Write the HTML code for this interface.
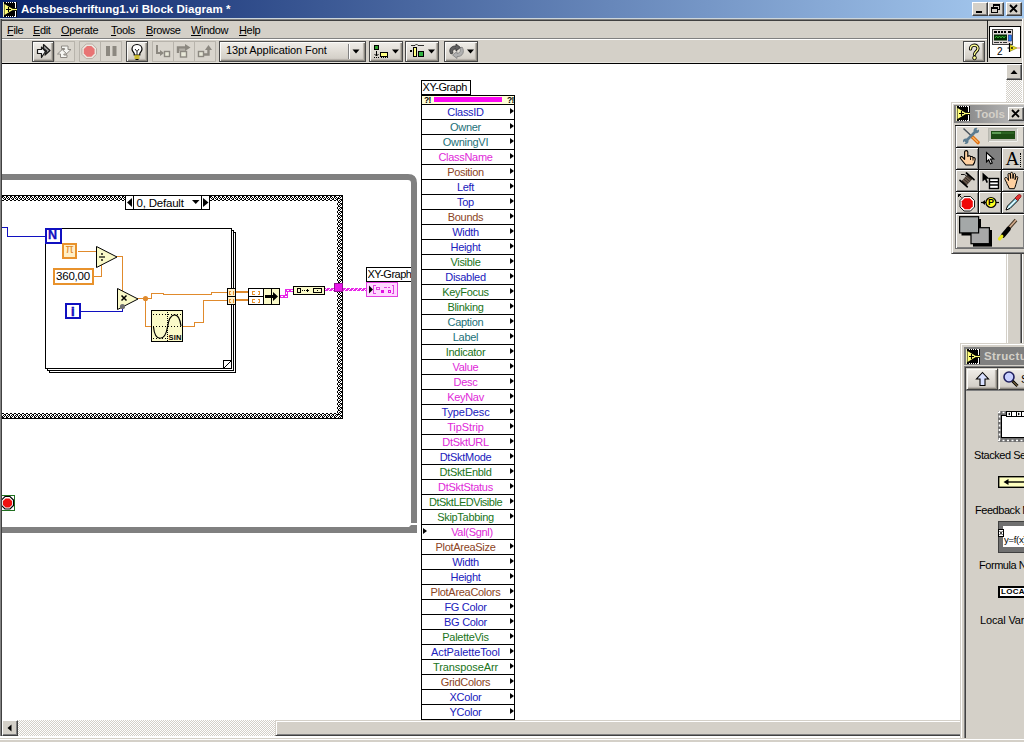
<!DOCTYPE html>
<html><head><meta charset="utf-8"><title>Achsbeschriftung1.vi Block Diagram</title>
<style>
*{box-sizing:border-box;margin:0;padding:0}
html,body{width:1024px;height:742px;overflow:hidden;background:#d4d0c8}
body{position:relative;font-family:"Liberation Sans",sans-serif;font-size:11px;color:#000}
.a{position:absolute}
.t{position:absolute;white-space:nowrap;line-height:13px}
.btn{position:absolute;background:#d4d0c8;border:1px solid;border-color:#fff #404040 #404040 #fff;box-shadow:inset -1px -1px 0 #808080}
.fbtn{position:absolute;border:1px solid #b8b4ac;background:#d9d5cd}
.rbtn{position:absolute;background:linear-gradient(#f0eee9,#dedad3 55%,#cfcbc3);border:1px solid #484848;box-shadow:inset 1px 1px 0 #fbfbf9,inset -1px -1px 0 #8c887f,inset -2px -2px 1px #b4b0a8}
.row{position:absolute;left:0;width:94px;height:16px;border:1px solid #000;background:#fff;text-align:center;line-height:13px;font-size:11px;white-space:nowrap}
.row span{position:absolute;left:0;width:87px;top:1px;text-align:center;letter-spacing:-0.3px}
.row i{position:absolute;right:0px;top:3px;width:0;height:0;border-left:4px solid #000;border-top:3.5px solid transparent;border-bottom:3.5px solid transparent}
.row i.l{right:auto;left:1px}.row span.v{left:8px;width:84px}.row span.n{letter-spacing:-0.5px}.row span.w{letter-spacing:-0.1px}
.cb{color:#2020bc}.ct{color:#1c7078}.cm{color:#e028d8}.cr{color:#8c4424}.cg{color:#207420}
u{text-decoration:underline;text-decoration-thickness:1px;text-underline-offset:1px}
</style></head><body>
<div class="a" style="left:2px;top:64px;width:1020px;height:656px;background:#fff"></div>
<div class="a" style="left:0;top:0;width:1024px;height:18px;background:linear-gradient(90deg,#0a246a 0%,#a6caf0 100%)"></div>
<div class="a" style="left:0;top:18px;width:1024px;height:1px;background:#ccd6dc"></div>
<div class="a" style="left:0;top:19px;width:1024px;height:1px;background:#808080"></div>
<div class="a" style="left:1px;top:20px;width:1022px;height:1px;background:#404040"></div>
<svg class="a" style="left:3px;top:2px" width="14" height="15" viewBox="0 0 14 15"><g shape-rendering="crispEdges"><rect width="14" height="15" fill="#000"/><rect x="0" y="0" width="1" height="15" fill="#f0f0b0"/><rect x="3" y="0" width="1" height="1" fill="#fff"/><rect x="5" y="0" width="1" height="1" fill="#fff"/><rect x="7" y="0" width="1" height="1" fill="#fff"/><rect x="9" y="0" width="1" height="1" fill="#fff"/><rect x="11" y="0" width="1" height="1" fill="#fff"/><rect x="3" y="14" width="1" height="1" fill="#fff"/><rect x="5" y="14" width="1" height="1" fill="#fff"/><rect x="7" y="14" width="1" height="1" fill="#fff"/><rect x="9" y="14" width="1" height="1" fill="#fff"/><rect x="11" y="14" width="1" height="1" fill="#fff"/><rect x="12" y="0" width="1" height="6" fill="#fff"/><rect x="12" y="9" width="1" height="6" fill="#fff"/></g><path d="M1.500 2L10.500 7.500L1.500 13z" fill="#ffff78"/><path d="M9 7.500h5" stroke="#ffff78" stroke-width="1.200"/><path d="M3 7.500h5M5.500 5v5" stroke="#000" stroke-width="1.100"/></svg>
<div class="t" style="left:21px;top:3px;color:#fff;font-weight:bold;font-size:11.5px;letter-spacing:0.03px" id="ttl">Achsbeschriftung1.vi Block Diagram *</div>
<div class="btn" style="left:972px;top:2px;width:16px;height:14px"><svg width="14" height="12"><rect x="3" y="8" width="6" height="2" fill="#000"/></svg></div>
<div class="btn" style="left:988px;top:2px;width:16px;height:14px"><svg width="14" height="12"><rect x="4.5" y="1.5" width="6" height="5" fill="none" stroke="#000"/><rect x="4" y="1" width="7" height="2" fill="#000"/><rect x="2.5" y="4.5" width="6" height="5" fill="#d4d0c8" stroke="#000"/><rect x="2" y="4" width="7" height="2" fill="#000"/></svg></div>
<div class="btn" style="left:1006px;top:2px;width:16px;height:14px"><svg width="14" height="12"><path d="M3 2l7 7M10 2l-7 7" stroke="#000" stroke-width="1.8"/></svg></div>
<div class="a" style="left:0;top:19px;width:1px;height:720px;background:#848484"></div>
<div class="a" style="left:1px;top:19px;width:1px;height:718px;background:#404040"></div>
<div class="a" style="left:1022px;top:19px;width:1px;height:720px;background:#fff"></div>
<div class="a" style="left:1023px;top:19px;width:1px;height:720px;background:#d4d0c8"></div>
<div class="t m" style="left:7px;top:24px;letter-spacing:-0.35px"><u>F</u>ile</div>
<div class="t m" style="left:33px;top:24px;letter-spacing:-0.35px"><u>E</u>dit</div>
<div class="t m" style="left:61px;top:24px;letter-spacing:-0.35px"><u>O</u>perate</div>
<div class="t m" style="left:111px;top:24px;letter-spacing:-0.35px"><u>T</u>ools</div>
<div class="t m" style="left:146px;top:24px;letter-spacing:-0.35px"><u>B</u>rowse</div>
<div class="t m" style="left:191px;top:24px;letter-spacing:-0.35px"><u>W</u>indow</div>
<div class="t m" style="left:239px;top:24px;letter-spacing:-0.35px"><u>H</u>elp</div>
<div class="a" style="left:2px;top:38px;width:985px;height:1px;background:#808080"></div>
<div class="a" style="left:2px;top:39px;width:985px;height:1px;background:#fff"></div>
<div class="a" style="left:987px;top:20px;width:1px;height:43px;background:#202020"></div>
<div class="a" style="left:2px;top:62px;width:1020px;height:1px;background:#e6e4de"></div><div class="a" style="left:2px;top:63px;width:1020px;height:1px;background:#000"></div>
<div class="rbtn" style="left:32px;top:41px;width:22px;height:21px"><svg width="20" height="19" viewBox="0 0 20 19"><path d="M4.500 7.500H8.500V5L12.500 9.500L8.500 15.500V11.500H4.500Z" fill="#f4f4f4" stroke="#181818" stroke-width="1.200" stroke-linejoin="round"/><path d="M10.500 2.500L17 8.500L12 13L13.500 9L10.500 6.500Z" fill="#a4a4a4" stroke="#181818" stroke-width="1.200" stroke-linejoin="round"/></svg></div>
<div class="fbtn" style="left:54px;top:41px;width:21px;height:21px"><svg width="19" height="19" viewBox="0 0 19 19"><path d="M6.500 4h6.500v3.500h3l-4.700 4.500l-4.700-4.500h3v-1h-3.100z" fill="#f6f6f2" stroke="#8e8a84" stroke-width="1"/><path d="M12 15.500h-6.500v-3.500h-3l4.700-4.500l4.700 4.500h-3v1h3.100z" fill="#f6f6f2" stroke="#8e8a84" stroke-width="1"/></svg></div>
<div class="fbtn" style="left:79px;top:41px;width:22px;height:21px"><svg width="20" height="19" viewBox="0 0 20 19"><path d="M6.200 2h6l4.300 4.300v6l-4.300 4.300h-6l-4.300-4.300v-6z" fill="#ece8e0" stroke="#b8aca4" stroke-width="1"/><path d="M7 3.900h4.400l3.200 3.200v4.400l-3.200 3.200h-4.400l-3.200-3.200v-4.400z" fill="#e87474"/></svg></div>
<div class="fbtn" style="left:100px;top:41px;width:22px;height:21px"><svg width="20" height="19" viewBox="0 0 20 19"><rect x="5" y="4" width="4" height="10" fill="#8c8880"/><rect x="11.500" y="4" width="4" height="10" fill="#8c8880"/></svg></div>
<div class="rbtn" style="left:126px;top:41px;width:22px;height:21px"><svg width="20" height="19" viewBox="0 0 20 19"><path d="M10 2.500c-3 0-5 2.100-5 4.600c0 2 1.500 3 2.200 4.400v1.500h5.600v-1.500c0.700-1.400 2.200-2.400 2.200-4.400c0-2.500-2-4.600-5-4.600z" fill="#fff" stroke="#000" stroke-width="1.2"/><path d="M8 7l2 2.500l2-2.500M10 9.500v3" fill="none" stroke="#000" stroke-width="0.9"/><path d="M7.500 14h5M7.500 16h5" stroke="#c8b400" stroke-width="1.3"/><path d="M8.500 17.500h3" stroke="#000" stroke-width="1"/></svg></div>
<div class="fbtn" style="left:152px;top:41px;width:22px;height:21px"><svg width="20" height="19" viewBox="0 0 20 19"><path d="M4 3v8h3.500" fill="none" stroke="#8c8880" stroke-width="2"/><path d="M7 8l4 3-4 3z" fill="#8c8880"/><rect x="11.500" y="9.500" width="5" height="5" fill="#e8e8d8" stroke="#8c8880" stroke-width="1.4"/></svg></div>
<div class="fbtn" style="left:173px;top:41px;width:22px;height:21px"><svg width="20" height="19" viewBox="0 0 20 19"><path d="M4 11v-5.500h8" fill="none" stroke="#8c8880" stroke-width="2.400"/><path d="M11 2l5.500 3.500-5.500 3.500z" fill="#8c8880"/><rect x="6.500" y="9.500" width="6" height="5.500" fill="#e8e8d8" stroke="#8c8880" stroke-width="1.400"/><path d="M5 8h7" stroke="#8c8880" stroke-width="1"/></svg></div>
<div class="fbtn" style="left:194px;top:41px;width:22px;height:21px"><svg width="20" height="19" viewBox="0 0 20 19"><rect x="3.500" y="9.500" width="5" height="5" fill="#e8e8d8" stroke="#8c8880" stroke-width="1.400"/><path d="M9 12.500h4.500v-5" fill="none" stroke="#8c8880" stroke-width="2.400"/><path d="M10 8l3.500-5 3.500 5z" fill="#8c8880"/></svg></div>
<div class="rbtn" style="left:219px;top:41px;width:147px;height:21px"></div>
<div class="a" style="left:348px;top:44px;width:1px;height:15px;background:#808080"></div><div class="a" style="left:349px;top:44px;width:1px;height:15px;background:#fff"></div>
<div class="t" style="left:226px;top:44px;font-size:11px;letter-spacing:-0.1px" id="fnt">13pt Application Font</div>
<svg class="a" style="left:352px;top:49px" width="9" height="5"><path d="M0.500 0.500h7l-3.500 4z" fill="#000"/></svg>
<div class="rbtn" style="left:369px;top:41px;width:34px;height:21px"><svg width="32" height="19" viewBox="0 0 32 19"><rect x="4.500" y="3.500" width="4" height="4" fill="#30a030" stroke="#000"/><path d="M6.500 9v5M4.500 12l2 2 2-2" fill="none" stroke="#000"/><path d="M4 15.500h5" stroke="#000" stroke-dasharray="1 1"/><rect x="10.500" y="10.500" width="7" height="4" fill="#ffff80" stroke="#000"/><path d="M11 15.500h7" stroke="#000" stroke-dasharray="1 1"/><path d="M22 7.500h7l-3.500 4z" fill="#000"/></svg></div>
<div class="rbtn" style="left:405px;top:41px;width:34px;height:21px"><svg width="32" height="19" viewBox="0 0 32 19"><path d="M5 3.500h4l1.500-1.500 1.500 1.500h6" fill="none" stroke="#000" stroke-width="0.800"/><rect x="4" y="8" width="2" height="2" fill="#000"/><rect x="7.500" y="5.500" width="3" height="9" fill="#ffff80" stroke="#000"/><rect x="12.500" y="9.500" width="5" height="5" fill="#30b040" stroke="#000"/><path d="M22 7.500h7l-3.500 4z" fill="#000"/></svg></div>
<div class="rbtn" style="left:444px;top:41px;width:34px;height:21px"><svg width="32" height="19" viewBox="0 0 32 19"><path d="M6 12c-3-4 0-8.500 5-8l0-2 4.500 3.500-4.500 3.500v-2c-3 0-4 2-3 4z" fill="#606060" stroke="#303030" stroke-width="0.800"/><path d="M17 5c3 4 1 10-5 9.500l0 2-4.500-3.500 4.500-3.500v2c3 0 4-3 3-5z" fill="#b0b0b0" stroke="#808080" stroke-width="0.800"/><path d="M22 7.500h7l-3.500 4z" fill="#000"/></svg></div>
<div class="rbtn" style="left:963px;top:41px;width:22px;height:21px"><svg width="20" height="19" viewBox="0 0 20 19"><path d="M6.500 7c0-5 7.500-5 7.500-0.500c0 3-3.500 3-3.500 6" fill="none" stroke="#000" stroke-width="3.200" stroke-linecap="round"/><path d="M6.500 7c0-5 7.500-5 7.500-0.500c0 3-3.500 3-3.500 6" fill="none" stroke="#ffff90" stroke-width="1.400" stroke-linecap="round"/><circle cx="10.500" cy="15.800" r="1.900" fill="#ffff90" stroke="#000" stroke-width="0.900"/></svg></div>
<div class="a" style="left:989px;top:26px;width:32px;height:32px;background:#fff;border:1px solid #000"><svg width="31" height="31" viewBox="0 0 31 31"><rect x="2.500" y="2.500" width="20" height="15" fill="#e0d8d8" stroke="#404040"/><path d="M4 5h3M8 5h2M11 5h2M14 5h2M18 5h3" stroke="#000" stroke-width="2"/><rect x="4" y="7.500" width="13" height="6" fill="#002800"/><path d="M5 11l1.500-2 1.500 2 1.500-2 1.500 2 1.500-2 1.500 2 1.500-2" fill="none" stroke="#40d040" stroke-width="0.800"/><rect x="18.500" y="8" width="3" height="6" fill="#2080f0" stroke="#102080" stroke-width="0.600"/><path d="M4 15.500h5M10 15.500h2M13 15.500h4" stroke="#303030" stroke-width="1"/><path d="M19.500 17.500l7.500 3.500-7.500 3.500z" fill="#f0e020" stroke="#808000" stroke-width="0.600"/><path d="M19.500 16v9" stroke="#000" stroke-width="1.200"/><path d="M27 21h3" stroke="#e06060" stroke-width="0.800"/><path d="M17.500 21h2" stroke="#000"/><circle cx="22" cy="21" r="0.900" fill="#000"/></svg><div class="t" style="left:7px;top:19px;font-size:10px;line-height:11px">2</div></div>
<div class="a" style="left:2px;top:720px;width:1004px;height:16px;background:repeating-conic-gradient(#d4d0c8 0% 25%,#fff 0% 50%) 0 0/2px 2px"></div>
<div class="btn" style="left:2px;top:720px;width:16px;height:16px"><svg width="14" height="14"><path d="M8.500 3.500v7l-4-3.500z" fill="#000"/></svg></div>
<div class="a" style="left:275px;top:720px;width:700px;height:16px;background:#d4d0c8;border:1px solid;border-color:#d4d0c8 #404040 #404040 #d4d0c8;box-shadow:inset 1px 1px 0 #fff,inset -1px -1px 0 #808080"></div>
<div class="a" style="left:1006px;top:64px;width:16px;height:656px;background:repeating-conic-gradient(#d4d0c8 0% 25%,#fff 0% 50%) 0 0/2px 2px"></div>
<div class="btn" style="left:1006px;top:64px;width:16px;height:16px"><svg width="14" height="14"><path d="M3.500 9h7l-3.500-4z" fill="#000"/></svg></div>
<div class="a" style="left:1006px;top:240px;width:16px;height:120px;background:#d4d0c8;border:1px solid;border-color:#d4d0c8 #404040 #404040 #d4d0c8;box-shadow:inset 1px 1px 0 #fff,inset -1px -1px 0 #808080"></div>
<div class="a" style="left:0;top:736px;width:1024px;height:2px;background:#fff"></div>
<svg class="a" style="left:2px;top:64px" width="418" height="656" viewBox="2 64 418 656" shape-rendering="crispEdges"><defs><pattern id="ph" x="0" y="195" width="4" height="6" patternUnits="userSpaceOnUse"><rect width="4" height="6" fill="#000"/><rect x="0" y="5" width="1" height="1" fill="#fff"/><rect x="1" y="5" width="1" height="1" fill="#fff"/><rect x="2" y="4" width="1" height="1" fill="#fff"/><rect x="3" y="4" width="1" height="1" fill="#fff"/><rect x="0" y="3" width="1" height="1" fill="#fff"/><rect x="2" y="3" width="1" height="1" fill="#fff"/><rect x="1" y="2" width="1" height="1" fill="#fff"/><rect x="3" y="2" width="1" height="1" fill="#fff"/><rect x="0" y="1" width="1" height="1" fill="#fff"/><rect x="1" y="1" width="1" height="1" fill="#fff"/></pattern><pattern id="ph2" x="0" y="413" width="4" height="6" patternUnits="userSpaceOnUse"><rect width="4" height="6" fill="#000"/><rect x="0" y="0" width="1" height="1" fill="#fff"/><rect x="1" y="0" width="1" height="1" fill="#fff"/><rect x="2" y="1" width="1" height="1" fill="#fff"/><rect x="3" y="1" width="1" height="1" fill="#fff"/><rect x="0" y="2" width="1" height="1" fill="#fff"/><rect x="2" y="2" width="1" height="1" fill="#fff"/><rect x="1" y="3" width="1" height="1" fill="#fff"/><rect x="3" y="3" width="1" height="1" fill="#fff"/><rect x="0" y="4" width="1" height="1" fill="#fff"/><rect x="1" y="4" width="1" height="1" fill="#fff"/></pattern><pattern id="pv" x="337" y="1" width="6" height="4" patternUnits="userSpaceOnUse"><rect width="6" height="4" fill="#000"/><rect x="0" y="0" width="1" height="1" fill="#fff"/><rect x="0" y="1" width="1" height="1" fill="#fff"/><rect x="1" y="2" width="1" height="1" fill="#fff"/><rect x="1" y="3" width="1" height="1" fill="#fff"/><rect x="2" y="0" width="1" height="1" fill="#fff"/><rect x="2" y="2" width="1" height="1" fill="#fff"/><rect x="3" y="1" width="1" height="1" fill="#fff"/><rect x="3" y="3" width="1" height="1" fill="#fff"/><rect x="4" y="0" width="1" height="1" fill="#fff"/><rect x="4" y="1" width="1" height="1" fill="#fff"/></pattern><pattern id="pw" x="0" y="288" width="4" height="3" patternUnits="userSpaceOnUse"><rect width="4" height="3" fill="#e828e8"/><rect x="2" y="0" width="1" height="1" fill="#fff"/><rect x="1" y="1" width="1" height="1" fill="#fff"/><rect x="0" y="2" width="1" height="1" fill="#fff"/></pattern></defs><g shape-rendering="auto"><path d="M0 177H408Q414 177 414 183V523" fill="none" stroke="#808080" stroke-width="6"/><path d="M0 527H409L411 525H417V533H0z" fill="#808080"/></g><rect x="0" y="195" width="338" height="6" fill="url(#ph)"/><rect x="0" y="413" width="338" height="6" fill="url(#ph2)"/><rect x="337" y="200" width="6" height="214" fill="url(#pv)"/><rect x="337" y="195" width="6" height="1" fill="#000"/><rect x="337" y="418" width="6" height="1" fill="#000"/><rect x="338" y="196" width="4" height="4" fill="url(#pv)"/><rect x="338" y="414" width="4" height="4" fill="url(#pv)"/><rect x="342" y="195" width="1" height="224" fill="#000"/><rect x="125.500" y="195.500" width="84" height="14" fill="#fff" stroke="#000"/><path d="M133.500 196v13M201.500 196v13" stroke="#000"/><path d="M127 202.500l5-4.500v9z" fill="#000" shape-rendering="auto"/><path d="M208.500 202.500l-5.500-4.500v9z" fill="#000" shape-rendering="auto"/><path d="M192 200h7.500l-3.750 4z" fill="#000" shape-rendering="auto"/><path d="M2 227.500H7.500V236.500H45" fill="none" stroke="#1010c0"/><path d="M49.500 370V372.500H235.500V232.500H233" fill="none" stroke="#000"/><path d="M47.500 368V370.500H233.500V230.500H231" fill="none" stroke="#000"/><rect x="45.500" y="228.500" width="186" height="140" fill="#fff" stroke="#000"/><path d="M223.500 368V360.500H231" fill="none" stroke="#000"/><path d="M223.500 368.500L231.500 360.500" stroke="#000" shape-rendering="auto"/><rect x="46" y="229" width="15" height="14" fill="#fff" stroke="#1010c0" stroke-width="2"/><rect x="63" y="244" width="13" height="14" fill="#fff0c8" stroke="#e8922c" stroke-width="2"/><rect x="54" y="269" width="39" height="15" fill="#fff" stroke="#e8922c" stroke-width="2"/><rect x="66" y="304" width="14" height="14" fill="#fff" stroke="#1010c0" stroke-width="2"/><path d="M78 251.500H96" fill="none" stroke="#e08a2c"/><path d="M94 276.500H101.500V264" fill="none" stroke="#e08a2c"/><path d="M116 256.500H122.500V291" fill="none" stroke="#e08a2c"/><path d="M137 298.500H151.500V293.500H163.500V294.500H211.500V292.500H227" fill="none" stroke="#e08a2c"/><path d="M145.500 298V326.500H151" fill="none" stroke="#e08a2c"/><path d="M183 326.500H194.500V322.500H203.500V300.500H227" fill="none" stroke="#e08a2c"/><circle cx="145.500" cy="298.500" r="2.600" fill="#e08a2c" shape-rendering="auto"/><path d="M81 311.500H122.500V306" fill="none" stroke="#1010c0"/><g shape-rendering="auto"><path d="M96.500 246.500V267.500L117 257z" fill="#fafac8" stroke="#000"/><path d="M117.500 288.500V309.500L138 299z" fill="#fafac8" stroke="#000"/><circle cx="122.500" cy="306.500" r="2.600" fill="#707070"/><path d="M99 257h6" stroke="#000" stroke-width="1.200"/><circle cx="102" cy="254" r="0.900"/><circle cx="102" cy="260" r="0.900"/><path d="M121.500 295.500l5 5M126.500 295.500l-5 5" stroke="#000" stroke-width="1.500"/></g><rect x="151.500" y="310.500" width="31" height="31" fill="#fafac8" stroke="#000"/><path d="M153 314.500H182M153 326.500H182M153 338.500H168" stroke="#000" stroke-dasharray="1 2"/><path d="M167.500 312V341" stroke="#000" stroke-dasharray="1 1"/><path d="M153.500 327C155 342 165 342 167.500 327C170 311 179 311 181 326" fill="none" stroke="#000" stroke-width="1.200" shape-rendering="auto"/><rect x="227.500" y="288.500" width="8" height="8" fill="#fff0c8" stroke="#000"/><path d="M230.500 291.500h-1v3h1M232.500 291.500h1v3h-1" fill="none" stroke="#e8922c"/><rect x="227.500" y="296.500" width="8" height="8" fill="#fff0c8" stroke="#000"/><path d="M230.500 299.500h-1v3h1M232.500 299.500h1v3h-1" fill="none" stroke="#e8922c"/><path d="M236 292H248M236 300H248" stroke="#e08a2c" stroke-width="2"/><rect x="248.500" y="288.500" width="31" height="16" fill="#fff" stroke="#000"/><rect x="263.500" y="288.500" width="16" height="16" fill="#fafac8" stroke="#000"/><path d="M249 296.500H264M271.500 289V304" stroke="#000"/><path d="M254.500 291.500h-2v3h2M257.500 291.500h2v3h-2" fill="none" stroke="#e8922c"/><path d="M254.500 299.500h-2v3h2M257.500 299.500h2v3h-2" fill="none" stroke="#e8922c"/><path d="M265 295h8v-3l5 4.500-5 4.500v-3h-8z" fill="#000" shape-rendering="auto"/><path d="M280 296.500H286.500V290.500H293" fill="none" stroke="#e828e8" stroke-width="3"/><path d="M281 296.500H286.500V290.500H293" fill="none" stroke="#fff" stroke-width="1" stroke-dasharray="2 2"/><rect x="325" y="288" width="10" height="3" fill="url(#pw)"/><rect x="343" y="288" width="24" height="3" fill="url(#pw)"/><rect x="293.500" y="286.500" width="31" height="8" fill="#fafac8" stroke="#000"/><rect x="297.500" y="288.500" width="3" height="4" fill="none" stroke="#000"/><path d="M302 290.500h4" stroke="#000" stroke-dasharray="1 1"/><path d="M306 290.500h3M307.500 289v3" stroke="#000"/><rect x="313.500" y="288.500" width="8" height="4" fill="none" stroke="#000"/><rect x="317" y="290" width="1" height="1" fill="#000"/><rect x="335" y="283" width="8" height="8" fill="#e010e0" stroke="#a010a0" stroke-width="0"/><rect x="334.500" y="283.500" width="8" height="8" fill="#e818e8" stroke="#901090"/><rect x="366.500" y="267.500" width="47" height="14" fill="#fff" stroke="#000"/><rect x="366.500" y="282.500" width="31" height="14" fill="#ffd8ff" stroke="#e040e0"/><path d="M369 285.500v8l4-4z" fill="#000" shape-rendering="auto"/><path d="M375.500 285.500h-2v8h2M391.500 285.500h2v8h-2" fill="none" stroke="#e040e0"/><rect x="376" y="287" width="3" height="2" fill="none" stroke="#e040e0"/><rect x="381" y="290" width="3" height="3" fill="#e010e0"/><rect x="388.500" y="290.500" width="2" height="2" fill="none" stroke="#e010e0"/><path d="M384 287.500h3M388 287.500h2" stroke="#e040e0"/><rect x="1.500" y="495.500" width="13" height="15" fill="#fff" stroke="#207020"/><g shape-rendering="auto"><path d="M5 496.500h5l3.500 3.500v5.500l-3.500 3.500h-5l-3.500-3.500v-5.500z" fill="#fff" stroke="#000" stroke-width="1.200"/><path d="M5.600 498.500h3.800l2.600 2.600v3.800l-2.600 2.600h-3.800l-2.600-2.600v-3.800z" fill="#f01010"/></g><rect x="411" y="190" width="6" height="333" fill="#808080"/></svg>
<div class="t" style="left:136.500px;top:196.500px;font-size:11.500px;letter-spacing:-0.2px" id="dflt">0, Default</div>
<div class="t" style="left:48px;top:229px;font-size:12.500px;font-weight:bold;color:#1010c0;-webkit-text-stroke:0.3px #1010c0">N</div>
<div class="t" style="left:65.500px;top:243px;font-size:12px;color:#e08a2c">&pi;</div>
<div class="t" style="left:56px;top:270px;font-size:11.500px;letter-spacing:-0.2px" id="c360">360,00</div>
<div class="t" style="left:71px;top:304.500px;font-size:13px;font-weight:bold;color:#1010c0;-webkit-text-stroke:0.5px #1010c0">i</div>
<div class="t" style="left:168.500px;top:333.500px;font-size:7.500px;font-weight:bold;line-height:8px;letter-spacing:0.2px">SIN</div>
<div class="t" style="left:367.500px;top:268px;font-size:11px;width:43.500px;overflow:hidden;letter-spacing:-0.5px">XY-Graph</div>
<div class="a" style="left:421px;top:80px;width:94px;height:640px">
<div class="a" style="left:0;top:0;width:50px;height:15px;border:1px solid #000;background:#fff"><div class="t" style="left:0.500px;top:0px;letter-spacing:-0.45px" id="xyl">XY-Graph</div></div>
<div class="a" style="left:0;top:15px;width:94px;height:10px;border:1px solid #000;background:#ffffd8"><div class="a" style="left:12px;top:1px;width:68px;height:5px;background:#fa08f2"></div><div class="t" style="left:2px;top:0px;font-size:8.500px;font-weight:bold;line-height:8px;letter-spacing:-0.8px">?!</div><div class="t" style="left:85px;top:0px;font-size:8.500px;font-weight:bold;line-height:8px;letter-spacing:-0.8px">?!</div></div>
<div class="row" style="top:24px"><span class="cb">ClassID</span><i></i></div>
<div class="row" style="top:39px"><span class="ct">Owner</span><i></i></div>
<div class="row" style="top:54px"><span class="ct">OwningVI</span><i></i></div>
<div class="row" style="top:69px"><span class="cm">ClassName</span><i></i></div>
<div class="row" style="top:84px"><span class="cr">Position</span><i></i></div>
<div class="row" style="top:99px"><span class="cb">Left</span><i></i></div>
<div class="row" style="top:114px"><span class="cb">Top</span><i></i></div>
<div class="row" style="top:129px"><span class="cr">Bounds</span><i></i></div>
<div class="row" style="top:144px"><span class="cb">Width</span><i></i></div>
<div class="row" style="top:159px"><span class="cb">Height</span><i></i></div>
<div class="row" style="top:174px"><span class="cg">Visible</span><i></i></div>
<div class="row" style="top:189px"><span class="cb">Disabled</span><i></i></div>
<div class="row" style="top:204px"><span class="cg">KeyFocus</span><i></i></div>
<div class="row" style="top:219px"><span class="cg">Blinking</span><i></i></div>
<div class="row" style="top:234px"><span class="ct">Caption</span><i></i></div>
<div class="row" style="top:249px"><span class="ct">Label</span><i></i></div>
<div class="row" style="top:264px"><span class="cg">Indicator</span><i></i></div>
<div class="row" style="top:279px"><span class="cm">Value</span><i></i></div>
<div class="row" style="top:294px"><span class="cm">Desc</span><i></i></div>
<div class="row" style="top:309px"><span class="cm">KeyNav</span><i></i></div>
<div class="row" style="top:324px"><span class="cb w">TypeDesc</span><i></i></div>
<div class="row" style="top:339px"><span class="cm w">TipStrip</span><i></i></div>
<div class="row" style="top:354px"><span class="cm">DtSktURL</span><i></i></div>
<div class="row" style="top:369px"><span class="cb">DtSktMode</span><i></i></div>
<div class="row" style="top:384px"><span class="cg">DtSktEnbld</span><i></i></div>
<div class="row" style="top:399px"><span class="cm">DtSktStatus</span><i></i></div>
<div class="row" style="top:414px"><span class="cg n">DtSktLEDVisible</span><i></i></div>
<div class="row" style="top:429px"><span class="cg">SkipTabbing</span><i></i></div>
<div class="row" style="top:444px"><span class="cm v">Val(Sgnl)</span><i class="l"></i></div>
<div class="row" style="top:459px"><span class="cr">PlotAreaSize</span><i></i></div>
<div class="row" style="top:474px"><span class="cb">Width</span><i></i></div>
<div class="row" style="top:489px"><span class="cb">Height</span><i></i></div>
<div class="row" style="top:504px"><span class="cr">PlotAreaColors</span><i></i></div>
<div class="row" style="top:519px"><span class="cb">FG Color</span><i></i></div>
<div class="row" style="top:534px"><span class="cb">BG Color</span><i></i></div>
<div class="row" style="top:549px"><span class="cg">PaletteVis</span><i></i></div>
<div class="row" style="top:564px"><span class="cb w">ActPaletteTool</span><i></i></div>
<div class="row" style="top:579px"><span class="cg w">TransposeArr</span><i></i></div>
<div class="row" style="top:594px"><span class="cr">GridColors</span><i></i></div>
<div class="row" style="top:609px"><span class="cb">XColor</span><i></i></div>
<div class="row" style="top:624px"><span class="cb">YColor</span><i></i></div>
</div>
<div class="a" style="left:951px;top:102px;width:80px;height:152px;background:#d4d0c8;border:1px solid;border-color:#d4d0c8 #404040 #404040 #d4d0c8;box-shadow:inset 1px 1px 0 #fff,inset -1px -1px 0 #808080"></div>
<div class="a" style="left:954px;top:105px;width:70px;height:18px;background:linear-gradient(90deg,#808080,#b8b8b8 90%)"></div>
<svg class="a" style="left:956px;top:106px" width="14" height="15" viewBox="0 0 14 15"><g shape-rendering="crispEdges"><rect width="14" height="15" fill="#000"/><rect x="0" y="0" width="1" height="15" fill="#f0f0b0"/><rect x="3" y="0" width="1" height="1" fill="#fff"/><rect x="5" y="0" width="1" height="1" fill="#fff"/><rect x="7" y="0" width="1" height="1" fill="#fff"/><rect x="9" y="0" width="1" height="1" fill="#fff"/><rect x="11" y="0" width="1" height="1" fill="#fff"/><rect x="3" y="14" width="1" height="1" fill="#fff"/><rect x="5" y="14" width="1" height="1" fill="#fff"/><rect x="7" y="14" width="1" height="1" fill="#fff"/><rect x="9" y="14" width="1" height="1" fill="#fff"/><rect x="11" y="14" width="1" height="1" fill="#fff"/><rect x="12" y="0" width="1" height="6" fill="#fff"/><rect x="12" y="9" width="1" height="6" fill="#fff"/></g><path d="M1.500 2L10.500 7.500L1.500 13z" fill="#ffff78"/><path d="M9 7.500h5" stroke="#ffff78" stroke-width="1.200"/><path d="M3 7.500h5M5.500 5v5" stroke="#000" stroke-width="1.100"/></svg>
<div class="t" style="left:975px;top:107.500px;color:#d4d0c8;font-weight:bold;font-size:11.500px;letter-spacing:0px" id="tlt">Tools</div>
<div class="btn" style="left:1008px;top:107px;width:16px;height:14px"><svg width="14" height="12"><path d="M3 2l7 7M10 2l-7 7" stroke="#000" stroke-width="1.800"/></svg></div>
<div class="a" style="left:955px;top:125px;width:69px;height:124px;background:#101010"></div>
<div class="a" style="left:955px;top:126px;width:1px;height:123px;background:#707070"></div><div class="a" style="left:955px;top:248px;width:69px;height:1px;background:#707070"></div>
<div class="a" style="left:956px;top:126px;width:68px;height:21px;background:#dedad2;box-shadow:inset 1px 1px 0 #fff,inset -1px -1px 0 #808080;"><svg width="68" height="21" viewBox="0 0 68 21"><path d="M7.500 2.500L15.500 10" stroke="#485058" stroke-width="1.400"/><path d="M16.500 11L22 16.500" stroke="#e07010" stroke-width="3.600" stroke-linecap="round"/><path d="M16.800 11.300L21.700 16.200" stroke="#ffc070" stroke-width="1.100" stroke-linecap="round"/><path d="M19.500 5.500L10.500 14.500" stroke="#5c7c90" stroke-width="2.600"/><circle cx="20.300" cy="4.500" r="2.700" fill="#5c7c90"/><circle cx="9.700" cy="15.200" r="2.700" fill="#5c7c90"/><path d="M21 3.800l2.500-2.500M9 15.900l-2.500 2.500" stroke="#dedad2" stroke-width="1.800"/><rect x="32.500" y="2.500" width="29" height="13" fill="#c4c4bc" stroke="#b8b8b0"/><path d="M33 15.500h28.500v-13" fill="none" stroke="#f0f0ec"/><rect x="35" y="5" width="24" height="8" fill="#1c4c14"/><rect x="36" y="6" width="9" height="2" fill="#5c9c54"/><rect x="45" y="6" width="13" height="2" fill="#2c6424"/></svg></div>
<div class="a" style="left:956px;top:148px;width:22px;height:21px;background:#d4d0c8;box-shadow:inset 1px 1px 0 #fff,inset -1px -1px 0 #808080;"><svg width="22" height="21" viewBox="0 0 22 21"><path d="M8.600 4c0-1.800 3.200-1.800 3.200 0v4.500c0.800-1.300 2.600-0.900 2.700 0.500c0.900-1 2.500-0.500 2.500 0.900c1-0.700 2.300 0 2.200 1.300c-0.200 2.500-0.800 4.300-2.200 5.800h-7.200c-1.500-1.800-3.500-4.200-5.300-6.500c-0.900-1.300 0.900-2.500 2-1.400l2.100 2.200z" fill="#ffd0a0" stroke="#000" stroke-width="1.100" stroke-linejoin="round"/><path d="M14.500 9.500v2.500M17 10.200v2.300" stroke="#000" stroke-width="0.900"/></svg></div>
<div class="a" style="left:979px;top:148px;width:22px;height:21px;background:#808080;"><svg width="22" height="21" viewBox="0 0 22 21"><path d="M7.500 4.500v9.500l2.200-2.200 1.800 4 1.800-0.900-1.800-3.900h3.200z" fill="#fff" stroke="#000" stroke-width="1.100"/></svg></div>
<div class="a" style="left:1002px;top:148px;width:22px;height:21px;background:#d4d0c8;box-shadow:inset 1px 1px 0 #fff,inset -1px -1px 0 #808080;"><svg width="22" height="21" viewBox="0 0 22 21"></svg></div>
<div class="t" style="left:1005.500px;top:147.500px;font-family:'Liberation Serif',serif;font-size:19px;line-height:22px">A</div>
<div class="a" style="left:1020px;top:153px;width:0;height:14px;border-left:1px dotted #000"></div>
<div class="a" style="left:956px;top:170px;width:22px;height:21px;background:#d4d0c8;box-shadow:inset 1px 1px 0 #fff,inset -1px -1px 0 #808080;"><svg width="22" height="21" viewBox="0 0 22 21"><path d="M11.500 5L16 9L10 15.500L5.500 11.500z" fill="#40342c" stroke="#201810" stroke-width="0.600"/><path d="M10 6.800l4.500 4M8.500 8.300l4.500 4M7 9.800l4.500 4" stroke="#a08c78" stroke-width="0.700"/><path d="M10.400 3l7.600 6.600M4 10.400l7.300 6.400" stroke="#000" stroke-width="1.700" stroke-linecap="round"/><path d="M5 4.500h3.500l2 1.500" fill="none" stroke="#000" stroke-width="0.900"/></svg></div>
<div class="a" style="left:979px;top:170px;width:22px;height:21px;background:#d4d0c8;box-shadow:inset 1px 1px 0 #fff,inset -1px -1px 0 #808080;"><svg width="22" height="21" viewBox="0 0 22 21"><path d="M3.500 2.500v9l2.500-2 1.500 3.500 1.500-0.800-1.500-3.500h3z" fill="#000"/><rect x="10.500" y="8.500" width="9" height="10" fill="#fff" stroke="#000" stroke-width="1.400"/><path d="M11 11.800h8M11 15h8" stroke="#000" stroke-width="1.400"/></svg></div>
<div class="a" style="left:1002px;top:170px;width:22px;height:21px;background:#d4d0c8;box-shadow:inset 1px 1px 0 #fff,inset -1px -1px 0 #808080;"><svg width="22" height="21" viewBox="0 0 22 21"><path d="M5 13c-2-3-3-5-1.500-5.500s2.500 2 3 3l-0.500-6c0-1.500 2-1.500 2.200 0l0.500 4-0.200-5c0-1.500 2.200-1.500 2.300 0l0.200 5 0.500-4c0.200-1.500 2.200-1.200 2 0.200l-0.500 5 1-2.500c0.500-1.300 2.200-0.800 1.800 0.500l-2 7c-0.500 2-1 3-1.500 4h-5c-0.500-2-1.500-3.500-2.500-5z" fill="#ffd0a0" stroke="#000" stroke-width="1"/></svg></div>
<div class="a" style="left:956px;top:192px;width:22px;height:21px;background:#d4d0c8;box-shadow:inset 1px 1px 0 #fff,inset -1px -1px 0 #808080;"><svg width="22" height="21" viewBox="0 0 22 21"><path d="M8 4.500h6.500l4 4v6.500l-4 4h-6.500l-4-4v-6.500z" fill="#fff" stroke="#000" stroke-width="0.900"/><path d="M8.700 6.200h5.100l3 3v5.100l-3 3h-5.100l-3-3v-5.100z" fill="#f00808"/><path d="M2.500 2.500l3 3M2.500 2.500h2.500M2.500 2.500v2.500" stroke="#000" fill="none"/></svg></div>
<div class="a" style="left:979px;top:192px;width:22px;height:21px;background:#d4d0c8;box-shadow:inset 1px 1px 0 #fff,inset -1px -1px 0 #808080;"><svg width="22" height="21" viewBox="0 0 22 21"><path d="M2 10.500h18" stroke="#000" stroke-width="1.200"/><path d="M3 10.500l3-2.500v5z" fill="#000"/><circle cx="12" cy="10.500" r="5" fill="#ffff20" stroke="#000" stroke-width="1.200"/></svg></div>
<div class="t" style="left:988px;top:197px;font-size:9px;font-weight:bold;line-height:11px">P</div>
<div class="a" style="left:1002px;top:192px;width:22px;height:21px;background:#d4d0c8;box-shadow:inset 1px 1px 0 #fff,inset -1px -1px 0 #808080;"><svg width="22" height="21" viewBox="0 0 22 21"><path d="M4 18l1.500-4 8-8 2.500 2.500-8 8z" fill="#a0e0f0" stroke="#000" stroke-width="1"/><path d="M5 17l8-8" stroke="#fff" stroke-width="1"/><path d="M13 6l3-3c2-1.500 4 0.500 2.500 2.500l-3 3z" fill="#e03030" stroke="#801010" stroke-width="0.800"/></svg></div>
<div class="a" style="left:956px;top:214px;width:68px;height:34px;background:#d4d0c8;box-shadow:inset 1px 1px 0 #fff,inset -1px -1px 0 #808080;"><svg width="68" height="34" viewBox="0 0 68 34"><rect x="5.500" y="5" width="19.500" height="16.500" fill="#000"/><rect x="17" y="16" width="19" height="16.600" fill="#000"/><rect x="15" y="13.700" width="18.400" height="16" fill="#a8a8a8" stroke="#000" stroke-width="1.200"/><rect x="3.600" y="2.700" width="19" height="16.200" fill="#a4a8a8" stroke="#000" stroke-width="1.200"/><path d="M60 6L52 15" stroke="#483828" stroke-width="3.600"/><path d="M60 6L52 15" stroke="#d4ac8c" stroke-width="1.600"/><path d="M52.500 15L47 21.500" stroke="#000" stroke-width="4.600" stroke-linecap="round"/><path d="M45.800 22.300L43.500 24.800" stroke="#e8e820" stroke-width="3.200" stroke-linecap="round"/></svg></div>
<div class="a" style="left:960px;top:343px;width:70px;height:395px;background:#d4d0c8"></div>
<div class="a" style="left:961px;top:344px;width:70px;height:1px;background:#fff"></div>
<div class="a" style="left:961px;top:344px;width:1px;height:394px;background:#fff"></div>
<div class="a" style="left:964px;top:347px;width:60px;height:18px;background:#808080"></div>
<svg class="a" style="left:966px;top:349px" width="14" height="15" viewBox="0 0 14 15"><g shape-rendering="crispEdges"><rect width="14" height="15" fill="#000"/><rect x="0" y="0" width="1" height="15" fill="#f0f0b0"/><rect x="3" y="0" width="1" height="1" fill="#fff"/><rect x="5" y="0" width="1" height="1" fill="#fff"/><rect x="7" y="0" width="1" height="1" fill="#fff"/><rect x="9" y="0" width="1" height="1" fill="#fff"/><rect x="11" y="0" width="1" height="1" fill="#fff"/><rect x="3" y="14" width="1" height="1" fill="#fff"/><rect x="5" y="14" width="1" height="1" fill="#fff"/><rect x="7" y="14" width="1" height="1" fill="#fff"/><rect x="9" y="14" width="1" height="1" fill="#fff"/><rect x="11" y="14" width="1" height="1" fill="#fff"/><rect x="12" y="0" width="1" height="6" fill="#fff"/><rect x="12" y="9" width="1" height="6" fill="#fff"/></g><path d="M1.500 2L10.500 7.500L1.500 13z" fill="#ffff78"/><path d="M9 7.500h5" stroke="#ffff78" stroke-width="1.200"/><path d="M3 7.500h5M5.500 5v5" stroke="#000" stroke-width="1.100"/></svg>
<div class="t" style="left:984px;top:349.500px;color:#d4d0c8;font-weight:bold;font-size:11.500px;letter-spacing:0.4px" id="stt">Structures</div>
<div class="a" style="left:964px;top:366px;width:60px;height:1px;background:#808080"></div>
<div class="a" style="left:964px;top:367px;width:60px;height:1px;background:#404040"></div>
<div class="a" style="left:964px;top:366px;width:1px;height:372px;background:#808080"></div>
<div class="a" style="left:965px;top:367px;width:1px;height:371px;background:#404040"></div>
<div class="a" style="left:966px;top:368px;width:58px;height:23px;background:#d4d0c8"></div>
<div class="a" style="left:966px;top:390px;width:58px;height:1px;background:#808080"></div>
<div class="rbtn" style="left:966px;top:368px;width:32px;height:22px;border-color:#d4d0c8 #404040 #404040 #d4d0c8"><svg width="30" height="20" viewBox="0 0 30 20"><path d="M15.500 3.500l6 6.500h-3.500v6.500h-5v-6.500h-3.500z" fill="#d8e0ff" stroke="#000" stroke-width="1.100"/></svg></div>
<div class="rbtn" style="left:998px;top:368px;width:60px;height:22px;border-color:#d4d0c8 #404040 #404040 #d4d0c8"><svg width="30" height="20" viewBox="0 0 30 20"><circle cx="10" cy="8" r="5" fill="#c8d0ff" stroke="#202060" stroke-width="1.600"/><path d="M13.500 12l5 5" stroke="#000" stroke-width="3"/><path d="M14 12.500l4.500 4.500" stroke="#c0a060" stroke-width="1"/></svg><div class="t" style="left:22px;top:4px;font-size:11px">Search</div></div>
<svg class="a" style="left:998px;top:411px" width="26" height="32" viewBox="0 0 26 32"><rect x="0" y="0" width="32" height="31" fill="#707070"/><rect x="3.500" y="4.500" width="30" height="22" fill="#fff" stroke="#000"/><path d="M0 1.500h32M0 29.500h32M1.500 0v31" stroke="#fff" stroke-width="1.500" stroke-dasharray="2 2.500"/><rect x="8.500" y="0.500" width="20" height="5" fill="#fff" stroke="#000"/><path d="M13.500 1v4M18.500 1v4M23.500 1v4" stroke="#000"/><path d="M12 1.500v3l-2-1.500zM20 1.500v3l2-1.500z" fill="#000"/></svg>
<div class="t" style="left:974px;top:449px;letter-spacing:-0.45px">Stacked Sequence</div>
<svg class="a" style="left:998px;top:476px" width="26" height="12" viewBox="0 0 26 12"><rect x="0.700" y="0.700" width="30" height="10.600" fill="#ffffc0" stroke="#000" stroke-width="1.400"/><path d="M10 6h16" stroke="#000" stroke-width="1.400"/><path d="M5.500 6l5-3v6z" fill="#000"/></svg>
<div class="t" style="left:975px;top:504px;letter-spacing:-0.45px">Feedback Node</div>
<svg class="a" style="left:998px;top:521px" width="26" height="32" viewBox="0 0 26 32"><rect x="0.500" y="0.500" width="32" height="31" fill="#707070" stroke="#404040"/><rect x="5" y="5" width="30" height="21" fill="#fff"/><rect x="0.500" y="8.500" width="5" height="7" fill="#fff" stroke="#000"/><path d="M1.500 10l3 4M4.500 10l-3 4" stroke="#000" stroke-width="0.800"/></svg>
<div class="t" style="left:1004px;top:534px;font-size:9.500px;line-height:11px;letter-spacing:-0.3px">y=f(x)</div>
<div class="t" style="left:979px;top:559px;letter-spacing:-0.45px">Formula Node</div>
<div class="a" style="left:998px;top:586px;width:40px;height:12px;border:2px solid #000;background:#fff"></div>
<div class="t" style="left:1001px;top:587px;font-size:8px;line-height:10px;font-weight:bold;letter-spacing:0.3px">LOCAL</div>
<div class="t" style="left:980px;top:614px;letter-spacing:-0.15px">Local Variable</div>
<div class="a" style="left:0;top:738px;width:1024px;height:1px;background:#d4d0c8"></div><div class="a" style="left:0;top:739px;width:1024px;height:1px;background:#fff"></div><div class="a" style="left:0;top:740px;width:1024px;height:2px;background:#d4d0c8"></div>
</body></html>
